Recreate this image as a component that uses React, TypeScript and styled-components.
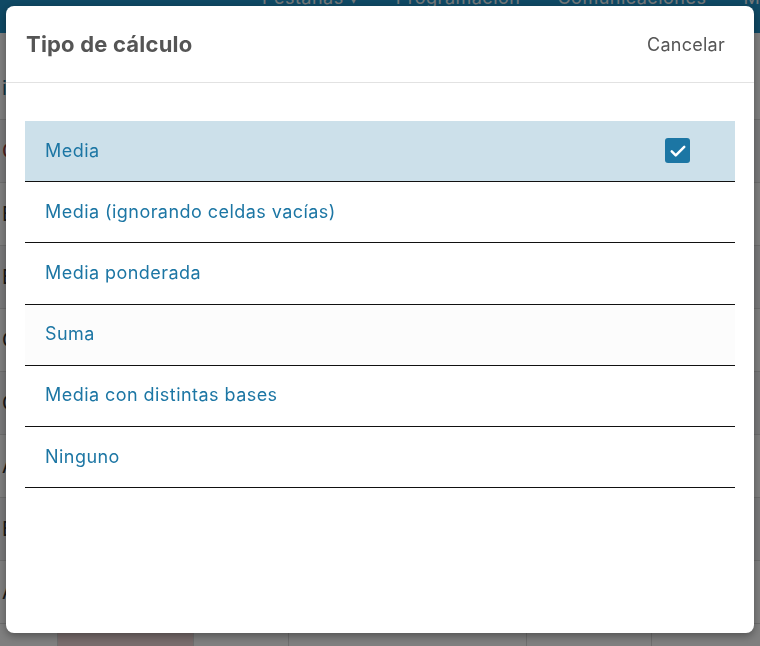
import styled, { createGlobalStyle } from 'styled-components';

const GlobalStyle = createGlobalStyle`
  html, body {
    margin: 0;
    padding: 0;
    overflow: hidden;
  }
  body {
    font-family: Inter, "Noto Sans", sans-serif;
    background: #ffffff;
  }
`;

const Page = styled.div`
  width: 760px;
  height: 646px;
  overflow: hidden;
`;

const NavBar = styled.div`
  margin-top: -13px;
  height: 46px;
  background: #1e92c8;
  display: flex;
  align-items: flex-start;
  gap: 37px;
  padding-left: 262px;
  color: #e6eef2;
  font-size: 18px;
  line-height: 22px;
  letter-spacing: 0.5px;
`;

const NavItem = styled.span`
  white-space: nowrap;
`;

const Table = styled.div`
  display: flex;
  flex-direction: column;
  padding-top: 24px;
`;

const Row = styled.div<{ $tint?: string }>`
  height: 62px;
  display: flex;
  align-items: center;
  border-bottom: 1px solid #dcdcdc;
  background: ${(p) => p.$tint || '#ffffff'};
  font-size: 20px;
  color: #333;
`;

const Cell = styled.div<{ $color?: string; $w: number; $bg?: string }>`
  width: ${(p) => p.$w}px;
  flex-shrink: 0;
  height: 100%;
  display: flex;
  align-items: center;
  padding-left: 2px;
  color: ${(p) => p.$color || '#333'};
  background: ${(p) => p.$bg || 'transparent'};
  border-right: 1px solid #dcdcdc;
  box-sizing: border-box;
`;

const TopCell = styled(Cell)`
  align-items: flex-start;
  padding: 22px 0 0 40px;
`;

const Ring = styled.div`
  width: 22px;
  height: 22px;
  border: 2px solid #e8a020;
  border-radius: 50%;
  margin-top: 30px;
`;

const Overlay = styled.div`
  position: fixed;
  inset: 0;
  background: rgba(0, 0, 0, 0.5);
  padding: 6px;
  box-sizing: border-box;
  display: flex;
  flex-direction: column;
`;

const Dialog = styled.div`
  height: 627px;
  background: #ffffff;
  border-radius: 8px;
  box-shadow: 0 3px 8px rgba(0, 0, 0, 0.35);
  display: flex;
  flex-direction: column;
  overflow: hidden;
`;

const Header = styled.div`
  height: 76px;
  border-bottom: 1px solid #e2e2e2;
  display: flex;
  align-items: center;
  justify-content: space-between;
  padding: 0 29px 0 20px;
  flex-shrink: 0;
`;

const Title = styled.h2`
  margin: 0;
  font-size: 22px;
  font-weight: 700;
  color: #555555;
  letter-spacing: 0.2px;
`;

const CancelButton = styled.button`
  border: none;
  background: none;
  padding: 0;
  font-family: inherit;
  font-size: 18px;
  letter-spacing: 0.25px;
  color: #555555;
  cursor: pointer;
`;

const List = styled.ul`
  list-style: none;
  margin: 38px 19px 0;
  padding: 0;
`;

const Option = styled.li<{ $selected?: boolean; $hover?: boolean }>`
  height: 60.2px;
  border-bottom: 1px solid #111111;
  display: flex;
  align-items: center;
  justify-content: space-between;
  padding: 0 45px 0 20px;
  font-size: 18px;
  color: #1c76a4;
  letter-spacing: 0.45px;
  background: ${(p) => (p.$selected ? '#cce0ea' : p.$hover ? '#fcfcfc' : 'transparent')};
`;

const Label = styled.span`
  margin-top: -2px;
`;

const Check = styled.span`
  width: 25px;
  height: 25px;
  border-radius: 3px;
  background: #1c76a4;
  display: flex;
  align-items: center;
  justify-content: center;
  margin-top: -1px;
`;

const options = [
  'Media',
  'Media (ignorando celdas vacías)',
  'Media ponderada',
  'Suma',
  'Media con distintas bases',
  'Ninguno',
];

const letters = ['i', 'Ci', 'B', 'E', 'C', 'C', 'A', 'E', 'A'];

export default function App() {
  const selected = 0;
  return (
    <Page>
      <GlobalStyle />
      <NavBar>
        <NavItem>Pestañas ▾</NavItem>
        <NavItem>Programación</NavItem>
        <NavItem>Comunicaciones</NavItem>
        <NavItem>Mensajes</NavItem>
      </NavBar>
      <Table>
        {letters.map((l, i) => (
          <Row key={i} $tint={i % 2 ? '#f3f3f5' : '#ffffff'}>
            <Cell $w={40} $color={i === 0 ? '#1c6d92' : i === 1 ? '#a04040' : '#333'}>
              {l}
            </Cell>
            <Cell $w={700} />
          </Row>
        ))}
        <Row>
          <Cell $w={58} />
          <Cell $w={136} $bg="#f0d8d8" />
          <Cell $w={95}>
            <Ring />
          </Cell>
          <TopCell $w={238}>No ha trabajado lo</TopCell>
          <Cell $w={125} />
        </Row>
      </Table>
      <Overlay>
        <Dialog role="dialog">
          <Header>
            <Title>Tipo de cálculo</Title>
            <CancelButton>Cancelar</CancelButton>
          </Header>
          <List>
            {options.map((o, i) => (
              <Option key={o} $selected={i === selected} $hover={i === 3}>
                <Label>{o}</Label>
                {i === selected && (
                  <Check>
                    <svg width="20" height="20" viewBox="0 0 24 24" fill="none">
                      <path
                        d="M4.5 12.5l4.8 4.8L19.5 7"
                        stroke="#ffffff"
                        strokeWidth="3"
                        strokeLinecap="round"
                        strokeLinejoin="round"
                      />
                    </svg>
                  </Check>
                )}
              </Option>
            ))}
          </List>
        </Dialog>
      </Overlay>
    </Page>
  );
}
